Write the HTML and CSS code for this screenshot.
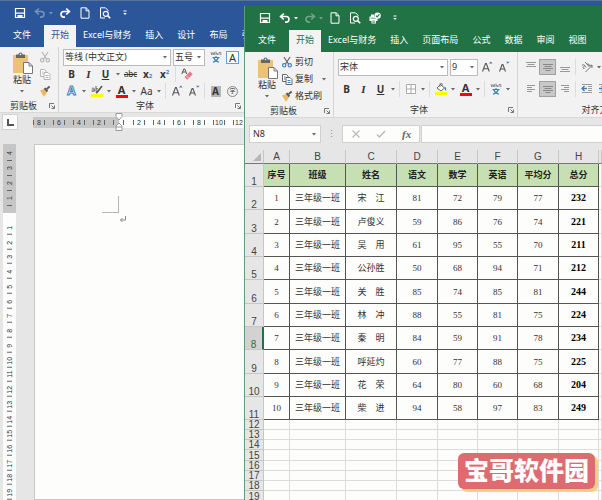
FILE: index.html
```html
<!DOCTYPE html>
<html lang="zh-CN">
<head>
    <meta charset="UTF-8">
    <meta name="viewport" content="width=device-width, initial-scale=1.0">
    <title>Word 与 Excel</title>
    <link rel="stylesheet" href="styles.css">
</head>
<body>
    <!-- shared icons -->
    <svg class="sprite" aria-hidden="true">
        <symbol id="i-save" viewBox="0 0 12 12"><path d="M1.5 1.5h9v9h-9z" fill="none" stroke="currentColor" stroke-width="1.2"/><path d="M2 5.6h8v1.2H2zM3.5 8h5v3h-5z" fill="currentColor"/></symbol>
        <symbol id="i-undo" viewBox="0 0 12 12"><path d="M4.8 1.5 1.5 4.5l3.3 3M1.8 4.5h5.4a2.8 2.8 0 0 1 0 5.6H6" fill="none" stroke="currentColor" stroke-width="1.6"/></symbol>
        <symbol id="i-redo" viewBox="0 0 12 12"><path d="m7.2 1.5 3.3 3-3.3 3M10.2 4.5H4.8a2.8 2.8 0 0 0 0 5.6H6" fill="none" stroke="currentColor" stroke-width="1.6"/></symbol>
        <symbol id="i-doc" viewBox="0 0 12 12"><path d="M2 .8h5.2L10 3.600v7.600H2zM7 .8v3h3" fill="none" stroke="currentColor"/></symbol>
        <symbol id="i-preview" viewBox="0 0 12 12"><path d="M6 11H1.500V.8h5L9 3.300V4" fill="none" stroke="currentColor"/><circle cx="6.800" cy="6.800" r="2.500" fill="none" stroke="currentColor" stroke-width="1.200"/><path d="m8.600 8.600 2.600 2.600" stroke="currentColor" stroke-width="1.600"/></symbol>
        <symbol id="i-print" viewBox="0 0 12 12"><path d="M.5 4.500h8V9h-8zM2 2.500h3v2H2zM2.500 8H7v3.500H2.500z" fill="currentColor"/><path d="M3.300 9h2.900M3.300 10.300h2.900M1.500 6.200h6" stroke="#217346" stroke-width=".7"/><circle cx="8.600" cy="3.600" r="3.200" fill="currentColor"/><path d="m7 3.600 1.200 1.300 2.200-2.500" fill="none" stroke="#217346" stroke-width="1.100"/></symbol>
        <symbol id="i-more" viewBox="0 0 12 12"><path d="M4.500 3.500h3v1h-3zM4.200 6h3.600L6 8z" fill="currentColor"/></symbol>
        <symbol id="i-caret" viewBox="0 0 6 6"><path d="M1 2h4L3 4.400z" fill="currentColor"/></symbol>
        <symbol id="i-paste" viewBox="0 0 20 22"><path d="M0 3h15v18H0z" fill="#edc277"/><path d="M3 2.500h2.500a2 2 0 0 1 4 0H12V6H3z" fill="#666"/><circle cx="7.500" cy="2.400" r=".8" fill="#f1f1f1"/><path d="M10.500 10.500h5.500l3.500 3.500v7.500h-9z" fill="#fff" stroke="#777"/><path d="M16 10.500V14h3.500" fill="none" stroke="#777"/></symbol>
        <symbol id="i-cut" viewBox="0 0 12 12"><path d="M3 1l4.500 7M9 1 4.500 8" stroke="var(--line)" stroke-width="1.200" fill="none"/><circle cx="3.200" cy="9.300" r="1.700" fill="none" stroke="var(--tint)" stroke-width="1.100"/><circle cx="8.800" cy="9.300" r="1.700" fill="none" stroke="var(--tint)" stroke-width="1.100"/></symbol>
        <symbol id="i-copy" viewBox="0 0 12 12"><path d="M1.500 1.500h4L7 3v5.500H1.500z" fill="#fff" stroke="var(--line)"/><path d="M5 4.500h4l2 2v5H5z" fill="#fff" stroke="var(--line)"/><path d="M6.500 7.500h3M6.500 9.500h3M3 4h1.500M3 6h1.500" stroke="var(--tint)"/></symbol>
        <symbol id="i-brush" viewBox="0 0 12 12"><path d="M1 5.500 5 4l3 3.500-3 4.200z" fill="#edb860"/><path d="m4.800 3.800 1.400-1.300 3 3.300-1.500 1.400z" fill="#555"/><path d="m7.600 4.200 3-2.700" stroke="#555" stroke-width="1.800"/></symbol>
        <symbol id="i-launch" viewBox="0 0 6 6"><path d="M.5 5V.5H5M2.500 2.500l2.500 2.500M5.500 2.500v3h-3" fill="none" stroke="#666" stroke-width=".9"/></symbol>
        <symbol id="i-pinyin" viewBox="0 0 12 12"><path d="m1 1 .8 3L3 1.500 4 4l.8-3M6 4V.5M6 2.500h1.500V4M9 4V1.500h1.800V4" fill="none" stroke="#777" stroke-width=".8"/><path d="M2.500 6.500h7M6 5v1.500M8.500 6.500C7.500 9 5.500 10.500 3 11.300M3.500 6.500C4.500 9 6.500 10.500 9 11.300" fill="none" stroke="#3c7fc0" stroke-width="1.100"/></symbol>
        <symbol id="i-eraser" viewBox="0 0 12 12"><path d="m.8 6 2-5h1l2 5M1.700 4h3" fill="none" stroke="#555"/><path d="m3.500 9 5.500-5.500 2.700 2.700L6.200 11.700z" fill="#e8788a"/><path d="M5 7.500l2.700 2.700" stroke="#fff" stroke-width=".7"/></symbol>
        <symbol id="i-marker" viewBox="0 0 12 12"><path d="M.8 3.500c1.500-1 2.500-.3 2.500 1V6.500M3.300 4.700C1.500 4.700.7 5.300.8 6s1.700.9 2.500-.3M5 1v5.500M5 4c1-.9 2.300-.5 2.300.9S6 6.900 5 6" fill="none" stroke="#555" stroke-width=".9"/><path d="m11 1-4.500 6-1.500 1" fill="none" stroke="#555" stroke-width="1.600"/><path d="M0 9h12v3H0z" fill="#ff0"/></symbol>
        <symbol id="i-fill" viewBox="0 0 12 12"><path d="m2 5 3.500-3.500L9.500 5 6 8z" fill="#fff" stroke="#666"/><path d="M5 4V.8c0-1 2-1 2 0V3" fill="none" stroke="#666" stroke-width=".9"/><path d="M9.500 3.500c2 1 2 3 1.500 4.500-1-.8-1.500-2-1.500-4.500z" fill="#3c7fc0"/><path d="M0 9h12v3H0z" fill="#ff0"/></symbol>
        <symbol id="i-border" viewBox="0 0 12 12"><path d="M1.500 1.500h9v9h-9zM6 1.500v9M1.500 6h9" fill="#fff" stroke="#aaa"/></symbol>
        <symbol id="i-atop" viewBox="0 0 12 12"><path d="M1 1.500h10M2.500 3.500h7M1 5.500h10" stroke="#999" fill="none"/></symbol>
        <symbol id="i-amid" viewBox="0 0 12 12"><path d="M1 3.500h10M2.500 5.500h7M1 7.500h10M3.500 9.500h5" stroke="#888" fill="none"/></symbol>
        <symbol id="i-abot" viewBox="0 0 12 12"><path d="M1 6.500h10M2.500 8.500h7M1 10.500h10" stroke="#999" fill="none"/></symbol>
        <symbol id="i-left" viewBox="0 0 12 12"><path d="M2 2.500h8M2 4.500h5M2 6.500h8M2 8.500h5" stroke="#999" fill="none"/></symbol>
        <symbol id="i-right" viewBox="0 0 12 12"><path d="M2 2.500h8M5 4.500h5M2 6.500h8M5 8.500h5" stroke="#999" fill="none"/></symbol>
        <symbol id="i-angle" viewBox="0 0 12 12"><path d="M1 4.500c1.300-1.500 2.500-.8 3 .5l1 1.500M3.500 5C1.500 6 1.800 8 3.500 7.500M4 1l4 4.500M6 3.300c1.500-1 3.200.6 2 2.200M4.500 11 11 4.500M8.500 4.300H11V7" fill="none" stroke="#666" stroke-width=".9"/></symbol>
        <symbol id="i-indent" viewBox="0 0 12 12"><path d="M1 1.500h10M7 3.500h4M7 5.500h4M7 7.500h4M1 9.500h10" stroke="#999"/><path d="M6 5.500H1.500M3.500 3 1 5.500 3.500 8" fill="none" stroke="#3c7fc0" stroke-width="1.300"/></symbol>
        <symbol id="i-indent-more" viewBox="0 0 12 12"><path d="M1 1.500h10M7 3.500h4M7 5.500h4M7 7.500h4M1 9.500h10" stroke="#999"/><path d="M1 5.500h4.500M3.500 3 6 5.500 3.500 8" fill="none" stroke="#3c7fc0" stroke-width="1.300"/></symbol>
        <symbol id="i-grow" viewBox="0 0 12 12"><path d="m1.500 10.500 3-8h.8l3 8M2.500 7.800h5" fill="none" stroke="#555" stroke-width="1.100"/><path d="M8 2.500h3.500L9.800.5z" fill="#3c7fc0"/></symbol>
        <symbol id="i-shrink" viewBox="0 0 12 12"><path d="m1.500 10.500 2.600-7h.8l2.600 7M2.500 8h4" fill="none" stroke="#555" stroke-width="1.100"/><path d="M8 .7h3.500L9.800 2.700z" fill="#3c7fc0"/></symbol>
    </svg>

    <div class="desktop">
        <section class="window word">
            <header class="titlebar">
                <div class="quick">
                    <button aria-label="保存"><svg><use href="#i-save"/></svg></button>
                    <button class="dim" aria-label="撤销"><svg><use href="#i-undo"/></svg></button>
                    <button class="caret dim" aria-label="撤销列表"><svg><use href="#i-caret"/></svg></button>
                    <button aria-label="重复"><svg><use href="#i-redo"/></svg></button>
                    <button aria-label="新建"><svg><use href="#i-doc"/></svg></button>
                    <button aria-label="打印预览"><svg><use href="#i-preview"/></svg></button>
                    <button aria-label="自定义"><svg><use href="#i-more"/></svg></button>
                </div>
                <nav class="tabs">
                    <a href="#" class="file">文件</a>
                    <a href="#" class="active">开始</a>
                    <a href="#">Excel与财务</a>
                    <a href="#">插入</a>
                    <a href="#">设计</a>
                    <a href="#">布局</a>
                    <a href="#">引用</a>
                </nav>
            </header>

            <div class="ribbon">
                <div class="group clipboard">
                    <div class="group-body">
                        <button class="paste"><svg class="big"><use href="#i-paste"/></svg>粘贴<svg class="arrow"><use href="#i-caret"/></svg></button>
                        <div class="rows faded">
                            <button class="tool" aria-label="剪切"><svg><use href="#i-cut"/></svg></button>
                            <button class="tool" aria-label="复制"><svg><use href="#i-copy"/></svg></button>
                            <button class="tool" aria-label="格式刷"><svg><use href="#i-brush"/></svg></button>
                        </div>
                    </div>
                    <div class="group-name"><span>剪贴板</span><svg><use href="#i-launch"/></svg></div>
                </div>
                <div class="group font">
                    <div class="rows">
                        <div class="row">
                            <span class="combo family"><select aria-label="字体"><option>等线 (中文正文)</option></select><svg class="arrow"><use href="#i-caret"/></svg></span>
                            <span class="combo size"><select aria-label="字号"><option>五号</option></select><svg class="arrow"><use href="#i-caret"/></svg></span>
                            <button class="tool" aria-label="拼音指南"><svg><use href="#i-pinyin"/></svg></button>
                            <button class="tool"><span class="framed">A</span></button>
                        </div>
                        <div class="row">
                            <button class="tool"><b>B</b></button>
                            <button class="tool"><i>I</i></button>
                            <button class="tool"><u>U</u></button>
                            <button class="caret" aria-label="下划线"><svg><use href="#i-caret"/></svg></button>
                            <button class="tool"><s>abc</s></button>
                            <button class="tool script">x<sub>2</sub></button>
                            <button class="tool script">x<sup>2</sup></button>
                            <span class="sep"></span>
                            <button class="tool" aria-label="清除格式"><svg><use href="#i-eraser"/></svg></button>
                        </div>
                        <div class="row">
                            <button class="tool"><span class="outline">A</span></button>
                            <button class="caret" aria-label="文本效果"><svg><use href="#i-caret"/></svg></button>
                            <button class="tool" aria-label="突出显示"><svg><use href="#i-marker"/></svg></button>
                            <button class="caret" aria-label="突出颜色"><svg><use href="#i-caret"/></svg></button>
                            <button class="tool"><span class="color">A</span></button>
                            <button class="caret" aria-label="字体颜色"><svg><use href="#i-caret"/></svg></button>
                            <button class="tool">Aa</button>
                            <button class="caret" aria-label="大小写"><svg><use href="#i-caret"/></svg></button>
                            <span class="sep"></span>
                            <button class="tool" aria-label="增大字号"><svg><use href="#i-grow"/></svg></button>
                            <button class="tool" aria-label="减小字号"><svg><use href="#i-shrink"/></svg></button>
                            <span class="sep"></span>
                            <button class="tool"><span class="shaded">A</span></button>
                            <button class="tool"><span class="ring">字</span></button>
                        </div>
                    </div>
                    <div class="group-name"><span>字体</span><svg><use href="#i-launch"/></svg></div>
                </div>
            </div>

            <div class="ruler-bar">
                <button class="tab-stop" aria-label="制表符"></button>
                <div class="ruler">
                    <div class="outside"><span>8</span><span>6</span><span>4</span><span>2</span><span class="half"></span></div>
                    <div class="inside"><span class="half"></span><span>2</span><span>4</span><span>6</span><span>8</span><span>10</span><span>12</span></div>
                    <svg class="indent-mark" viewBox="0 0 8 18"><path d="M1 .5h6v3L4 7 1 3.500zM4 10l3 3v4.500H1V13zM1 14h6" fill="#fff" stroke="#999"/></svg>
                </div>
            </div>

            <div class="document">
                <div class="v-ruler">
                    <div class="outside"><span>4</span><span>3</span><span>2</span><span>1</span></div>
                    <div class="inside">
                        <span>1</span><span>2</span><span>3</span><span>4</span><span>5</span><span>6</span><span>7</span><span>8</span><span>9</span><span>10</span><span>11</span><span>12</span><span>13</span><span>14</span><span>15</span><span>16</span><span>17</span><span>18</span><span>19</span>
                    </div>
                </div>
                <div class="page">
                    <div class="corner"></div>
                    <svg class="return" viewBox="0 0 8 8"><path d="M6.500 1v4h-5M3.500 3l-2 2 2 2" fill="none" stroke="#888"/></svg>
                </div>
            </div>
        </section>

        <section class="window excel">
            <header class="titlebar">
                <div class="quick">
                    <button aria-label="保存"><svg><use href="#i-save"/></svg></button>
                    <button aria-label="撤销"><svg><use href="#i-undo"/></svg></button>
                    <button class="caret" aria-label="撤销列表"><svg><use href="#i-caret"/></svg></button>
                    <button class="dim" aria-label="恢复"><svg><use href="#i-redo"/></svg></button>
                    <button class="caret dim" aria-label="恢复列表"><svg><use href="#i-caret"/></svg></button>
                    <button aria-label="新建"><svg><use href="#i-doc"/></svg></button>
                    <button aria-label="打印预览"><svg><use href="#i-preview"/></svg></button>
                    <button aria-label="快速打印"><svg><use href="#i-print"/></svg></button>
                    <button aria-label="自定义"><svg><use href="#i-more"/></svg></button>
                </div>
                <nav class="tabs">
                    <a href="#" class="file">文件</a>
                    <a href="#" class="active">开始</a>
                    <a href="#">Excel与财务</a>
                    <a href="#">插入</a>
                    <a href="#">页面布局</a>
                    <a href="#">公式</a>
                    <a href="#">数据</a>
                    <a href="#">审阅</a>
                    <a href="#">视图</a>
                </nav>
            </header>

            <div class="ribbon">
                <div class="group clipboard">
                    <div class="group-body">
                        <button class="paste"><svg class="big"><use href="#i-paste"/></svg>粘贴<svg class="arrow"><use href="#i-caret"/></svg></button>
                        <div class="rows">
                            <button class="labelled"><svg><use href="#i-cut"/></svg>剪切</button>
                            <button class="labelled"><svg><use href="#i-copy"/></svg>复制<svg class="arrow"><use href="#i-caret"/></svg></button>
                            <button class="labelled"><svg><use href="#i-brush"/></svg>格式刷</button>
                        </div>
                    </div>
                    <div class="group-name"><span>剪贴板</span><svg><use href="#i-launch"/></svg></div>
                </div>
                <div class="group font">
                    <div class="rows">
                        <div class="row">
                            <span class="combo family"><select aria-label="字体"><option>宋体</option></select><svg class="arrow"><use href="#i-caret"/></svg></span>
                            <span class="combo size"><select aria-label="字号"><option>9</option></select><svg class="arrow"><use href="#i-caret"/></svg></span>
                            <button class="tool" aria-label="增大字号"><svg><use href="#i-grow"/></svg></button>
                            <button class="tool" aria-label="减小字号"><svg><use href="#i-shrink"/></svg></button>
                        </div>
                        <div class="row">
                            <button class="tool"><b>B</b></button>
                            <button class="tool"><i>I</i></button>
                            <button class="tool"><u>U</u></button>
                            <button class="caret" aria-label="下划线"><svg><use href="#i-caret"/></svg></button>
                            <span class="sep"></span>
                            <button class="tool" aria-label="边框"><svg><use href="#i-border"/></svg></button>
                            <button class="caret" aria-label="边框样式"><svg><use href="#i-caret"/></svg></button>
                            <span class="sep"></span>
                            <button class="tool" aria-label="填充"><svg><use href="#i-fill"/></svg></button>
                            <button class="caret" aria-label="填充颜色"><svg><use href="#i-caret"/></svg></button>
                            <button class="tool"><span class="color">A</span></button>
                            <button class="caret" aria-label="字体颜色"><svg><use href="#i-caret"/></svg></button>
                            <span class="sep"></span>
                            <button class="tool" aria-label="拼音"><svg><use href="#i-pinyin"/></svg></button>
                            <button class="caret" aria-label="拼音设置"><svg><use href="#i-caret"/></svg></button>
                        </div>
                    </div>
                    <div class="group-name"><span>字体</span><svg><use href="#i-launch"/></svg></div>
                </div>
                <div class="group align">
                    <div class="rows">
                        <div class="row">
                            <button class="tool" aria-label="顶端对齐"><svg><use href="#i-atop"/></svg></button>
                            <button class="tool pressed" aria-label="垂直居中"><svg><use href="#i-amid"/></svg></button>
                            <button class="tool" aria-label="底端对齐"><svg><use href="#i-abot"/></svg></button>
                            <span class="sep"></span>
                            <button class="tool" aria-label="方向"><svg><use href="#i-angle"/></svg></button>
                            <button class="caret" aria-label="方向选项"><svg><use href="#i-caret"/></svg></button>
                        </div>
                        <div class="row">
                            <button class="tool" aria-label="左对齐"><svg><use href="#i-left"/></svg></button>
                            <button class="tool pressed" aria-label="居中"><svg><use href="#i-amid"/></svg></button>
                            <button class="tool" aria-label="右对齐"><svg><use href="#i-right"/></svg></button>
                            <span class="sep"></span>
                            <button class="tool" aria-label="减少缩进"><svg><use href="#i-indent"/></svg></button>
                            <button class="tool" aria-label="增加缩进"><svg><use href="#i-indent-more"/></svg></button>
                        </div>
                    </div>
                    <div class="group-name"><span>对齐方式</span></div>
                </div>
            </div>

            <div class="formula-bar">
                <span class="name-box"><input type="text" value="N8" aria-label="名称框"><svg class="arrow"><use href="#i-caret"/></svg></span>
                <span class="dots">⋮</span>
                <span class="formula-tools">
                    <button aria-label="取消"><svg viewBox="0 0 10 10"><path d="m1.500 1.500 7 7M8.500 1.500l-7 7" stroke="#bbb" stroke-width="1.300"/></svg></button>
                    <button aria-label="输入"><svg viewBox="0 0 10 10"><path d="M1 5.500 3.500 8 9 2" fill="none" stroke="#bbb" stroke-width="1.500"/></svg></button>
                    <button class="fx">fx</button>
                </span>
                <input class="formula" type="text" aria-label="编辑栏">
            </div>

            <table class="sheet">
                <colgroup>
                    <col class="c-head"><col class="c-a"><col class="c-b"><col class="c-c"><col class="c-d"><col class="c-e"><col class="c-f"><col class="c-g"><col class="c-h"><col>
                </colgroup>
                <thead>
                    <tr><th><svg class="select-all" viewBox="0 0 8 8"><path d="M8 0v8H0z" fill="#b5b5b5"/></svg></th><th>A</th><th>B</th><th>C</th><th>D</th><th>E</th><th>F</th><th>G</th><th>H</th><th></th></tr>
                </thead>
                <tbody class="data">
                    <tr class="titles"><th>1</th><td>序号</td><td>班级</td><td>姓名</td><td>语文</td><td>数学</td><td>英语</td><td>平均分</td><td>总分</td><td></td></tr>
                    <tr><th>2</th><td>1</td><td>三年级一班</td><td>宋　江</td><td>81</td><td>72</td><td>79</td><td>77</td><td>232</td><td></td></tr>
                    <tr><th>3</th><td>2</td><td>三年级一班</td><td>卢俊义</td><td>59</td><td>86</td><td>76</td><td>74</td><td>221</td><td></td></tr>
                    <tr><th>4</th><td>3</td><td>三年级一班</td><td>吴　用</td><td>61</td><td>95</td><td>55</td><td>70</td><td>211</td><td></td></tr>
                    <tr><th>5</th><td>4</td><td>三年级一班</td><td>公孙胜</td><td>50</td><td>68</td><td>94</td><td>71</td><td>212</td><td></td></tr>
                    <tr><th>6</th><td>5</td><td>三年级一班</td><td>关　胜</td><td>85</td><td>74</td><td>85</td><td>81</td><td>244</td><td></td></tr>
                    <tr><th>7</th><td>6</td><td>三年级一班</td><td>林　冲</td><td>88</td><td>55</td><td>81</td><td>75</td><td>224</td><td></td></tr>
                    <tr class="current"><th>8</th><td>7</td><td>三年级一班</td><td>秦　明</td><td>84</td><td>59</td><td>91</td><td>78</td><td>234</td><td></td></tr>
                    <tr><th>9</th><td>8</td><td>三年级一班</td><td>呼延灼</td><td>60</td><td>77</td><td>88</td><td>75</td><td>225</td><td></td></tr>
                    <tr><th>10</th><td>9</td><td>三年级一班</td><td>花　荣</td><td>64</td><td>80</td><td>60</td><td>68</td><td>204</td><td></td></tr>
                    <tr><th>11</th><td>10</td><td>三年级一班</td><td>柴　进</td><td>94</td><td>58</td><td>97</td><td>83</td><td>249</td><td></td></tr>
                </tbody>
                <tbody class="empty">
                    <tr><th>12</th><td></td><td></td><td></td><td></td><td></td><td></td><td></td><td></td><td></td></tr>
                    <tr><th>13</th><td></td><td></td><td></td><td></td><td></td><td></td><td></td><td></td><td></td></tr>
                    <tr><th>14</th><td></td><td></td><td></td><td></td><td></td><td></td><td></td><td></td><td></td></tr>
                    <tr><th>15</th><td></td><td></td><td></td><td></td><td></td><td></td><td></td><td></td><td></td></tr>
                    <tr><th>16</th><td></td><td></td><td></td><td></td><td></td><td></td><td></td><td></td><td></td></tr>
                    <tr><th>17</th><td></td><td></td><td></td><td></td><td></td><td></td><td></td><td></td><td></td></tr>
                    <tr><th>18</th><td></td><td></td><td></td><td></td><td></td><td></td><td></td><td></td><td></td></tr>
                    <tr><th>19</th><td></td><td></td><td></td><td></td><td></td><td></td><td></td><td></td><td></td></tr>
                </tbody>
            </table>
        </section>

        <div class="watermark">宝哥软件园</div>
    </div>
</body>
</html>
```
FILE: styles.css
```css
* {
    box-sizing: border-box;
}
body {
    margin: 0;
    font-family: "Noto Sans", "Noto Sans CJK SC", sans-serif;
    font-size: 9px;
    line-height: 12px;
    color: #333;
}
.sprite {
    display: none;
}
button, select, input {
    font: inherit;
    color: inherit;
    background: none;
    border: 0;
    border-radius: 0;
    margin: 0;
    padding: 0;
    outline: none;
}
button {
    flex: none;
    display: flex;
    align-items: center;
    justify-content: center;
}
svg {
    flex: none;
    display: block;
    width: 12px;
    height: 12px;
}
svg.arrow, .caret svg {
    width: 6px;
    height: 6px;
    color: #666;
}

/* windows */
.desktop {
    position: relative;
    height: 100vh;
    overflow: hidden;
}
.window {
    position: absolute;
    right: 0;
    bottom: 0;
    display: flex;
    flex-direction: column;
    overflow: hidden;
}
.word {
    left: 0;
    top: 0;
    border-top: 1px solid #5b7496;
    background: #e6e6e6;
    --brand: #2b579a;
}
.excel {
    left: 244px;
    top: 6px;
    border-left: 1px solid #5f9c7a;
    background: #fdfdfc;
    --brand: #217346;
}

/* title bar */
.titlebar {
    flex: none;
    background: var(--brand);
    color: #fff;
}
.quick {
    display: flex;
    align-items: center;
    height: 24px;
    padding-left: 12px;
}
.quick button {
    width: 16px;
    height: 16px;
    margin-right: 4px;
}
.quick .caret {
    width: 6px;
    margin-left: -4px;
    margin-right: 3px;
}
.quick .caret svg {
    color: inherit;
}
.quick .dim {
    opacity: 0.35;
}
.tabs {
    display: flex;
    height: 22px;
    overflow: hidden;
}
.tabs a {
    flex: none;
    padding: 0 7px;
    line-height: 20px;
    color: #fff;
    text-decoration: none;
}
.tabs .file {
    padding: 0 13px;
}
.tabs .active {
    background: #f3f3f3;
    color: var(--brand);
}

/* ribbon */
.ribbon {
    flex: none;
    display: flex;
    height: 66px;
    background: #f2f2f2;
    border-bottom: 1px solid #d8d8d8;
}
.group {
    flex: none;
    display: flex;
    flex-direction: column;
    border-right: 1px solid #d4d4d4;
    padding: 2px 0 0 4px;
}
.group-body {
    display: flex;
}
.clipboard {
    padding-left: 10px;
    width: 59px;
}
.excel .clipboard {
    width: 89px;
}
.font {
    width: 186px;
}
.excel .font {
    width: 184px;
}
.align {
    width: 168px;
}
.excel .font, .excel .align {
    padding-top: 7px;
}
.rows {
    display: flex;
    flex-direction: column;
    gap: 1px;
}
.excel .font .rows, .excel .align .rows {
    gap: 6px;
}
.row {
    display: flex;
    align-items: center;
    height: 16px;
}
.group-name {
    display: flex;
    align-items: center;
    margin-top: auto;
    height: 14px;
}
.group-name span {
    flex: 1;
    padding-right: 8px;
    text-align: center;
}
.clipboard .group-name span {
    padding-right: 12px;
}
.group-name svg {
    width: 6px;
    height: 6px;
    margin-right: 3px;
}
.paste {
    flex-direction: column;
    justify-content: flex-start;
    width: 24px;
    padding-top: 3px;
}
.paste .big {
    width: 20px;
    height: 22px;
    margin-left: 2px;
}
.paste .arrow {
    margin-top: 2px;
}
.clipboard .rows {
    --line: #666;
    --tint: #3c7fc0;
    margin-left: 2px;
}
.clipboard .faded {
    --line: #b5b5b5;
    --tint: #b5b5b5;
}
.labelled {
    justify-content: flex-start;
    gap: 2px;
    height: 16px;
}
.labelled .arrow {
    margin-left: 6px;
}
.tool {
    width: 17px;
    height: 16px;
    font-size: 10px;
}
.caret {
    width: 8px;
    height: 16px;
}
.sep {
    width: 1px;
    height: 16px;
    margin: 0 2px;
    background: #dcdcdc;
}
.pressed {
    background: #c8c8c8;
    border: 1px solid #a0a0a0;
}
.tool i {
    font-family: "Liberation Serif", serif;
    font-weight: bold;
    font-size: 11px;
}
.tool u {
    font-weight: bold;
}
.tool s {
    font-size: 8px;
}
.script {
    font-weight: bold;
}
.script sub, .script sup {
    font-size: 6px;
    line-height: 6px;
    color: #3c7fc0;
}
.script sub {
    align-self: flex-end;
    margin-bottom: 3px;
}
.script sup {
    align-self: flex-start;
    margin-top: 3px;
}
.framed {
    width: 13px;
    border: 1px solid #6a9fd4;
    background: #fff;
    line-height: 11px;
    font-size: 11px;
}
.outline {
    font-weight: bold;
    font-size: 12px;
    color: #fff;
    -webkit-text-stroke: 1px #3c7fc0;
}
.color {
    width: 12px;
    border-bottom: 3px solid #f00;
    font-weight: bold;
    line-height: 10px;
    font-size: 11px;
}
.shaded {
    width: 10px;
    background: #b5b5b5;
    font-weight: bold;
    line-height: 11px;
}
.ring {
    width: 11px;
    border: 1px solid #888;
    border-radius: 50%;
    font-size: 6px;
    line-height: 9px;
}
.combo {
    display: flex;
    align-items: center;
    height: 17px;
    margin-right: 2px;
    padding-right: 2px;
    background: #fff;
    border: 1px solid #bbb;
}
.combo select {
    flex: 1;
    min-width: 0;
    height: 15px;
    padding-left: 1px;
    appearance: none;
}
.family {
    width: 108px;
}
.size {
    width: 32px;
}
.excel .family {
    width: 110px;
}
.excel .size {
    width: 28px;
    margin-right: 0;
}

/* rulers */
.ruler-bar {
    flex: none;
    display: flex;
    height: 31px;
    padding: 1px 0 0 2px;
}
.tab-stop {
    width: 16px;
    height: 16px;
    background: #fdfdfd;
    border: 1px solid #d0d0d0;
}
.tab-stop::before {
    content: "";
    width: 5px;
    height: 5px;
    border-left: 2px solid #555;
    border-bottom: 2px solid #555;
}
.ruler {
    position: relative;
    flex: 1;
    display: flex;
    height: 11px;
    margin: 3px 0 0 15px;
    font-family: "Liberation Sans", sans-serif;
    font-size: 7px;
    line-height: 11px;
}
.ruler .outside {
    display: flex;
    justify-content: flex-end;
    width: 86px;
    overflow: hidden;
}
.ruler .inside {
    flex: 1;
    display: flex;
    overflow: hidden;
}
.outside {
    background: #c6c6c6;
}
.inside {
    background: #fdfdfd;
}
.ruler span {
    flex: none;
    display: flex;
    align-items: center;
    justify-content: space-between;
    width: 20px;
    padding: 0 4px;
}
.ruler span::before, .ruler span::after {
    content: "";
    width: 1px;
    height: 5px;
    background: #666;
}
.ruler .half {
    width: 10px;
}
.ruler .half::after {
    display: none;
}
.indent-mark {
    position: absolute;
    left: 82px;
    top: -4px;
    width: 8px;
    height: 18px;
}
.document {
    flex: 1;
    display: flex;
    min-height: 0;
    padding-left: 3px;
}
.v-ruler {
    flex: none;
    display: flex;
    flex-direction: column;
    width: 13px;
    font-family: "Liberation Sans", sans-serif;
    font-size: 7px;
    line-height: 13px;
}
.v-ruler .outside {
    height: 69px;
    padding-top: 2px;
}
.v-ruler .inside {
    flex: 1;
    display: flex;
    flex-direction: column;
    min-height: 0;
    padding-top: 7px;
}
.v-ruler span {
    display: flex;
    align-items: center;
    justify-content: center;
    position: relative;
    width: 13px;
    writing-mode: vertical-rl;
    transform: rotate(180deg);
}
.v-ruler .outside span {
    height: 15px;
}
.v-ruler .inside span {
    flex: 1;
    min-height: 0;
}
.v-ruler span::after {
    content: "";
    position: absolute;
    left: 4px;
    top: 0;
    width: 5px;
    height: 1px;
    background: #666;
}
.page {
    flex: 1;
    margin-left: 18px;
    padding: 51px 0 0 67px;
    background: #fdfdfc;
    border: 1px solid #c8c8c8;
}
.corner {
    width: 17px;
    height: 17px;
    border-right: 1px solid #b5b5b5;
    border-bottom: 1px solid #b5b5b5;
}
.return {
    width: 8px;
    height: 8px;
    margin: 2px 0 0 17px;
}

/* formula bar */
.formula-bar {
    flex: none;
    display: flex;
    align-items: center;
    height: 32px;
    padding-left: 4px;
    background: #e6e6e6;
}
.name-box, .formula-tools, .formula {
    height: 18px;
    background: #fdfdfc;
    border: 1px solid #d0d0d0;
}
.name-box {
    display: flex;
    align-items: center;
    width: 72px;
    padding: 0 3px;
}
.name-box input {
    flex: 1;
    min-width: 0;
}
.dots {
    width: 21px;
    text-align: center;
    color: #888;
}
.formula-tools {
    display: flex;
    align-items: center;
    justify-content: space-around;
    width: 78px;
}
.formula-tools svg {
    width: 10px;
    height: 10px;
}
.fx {
    font-family: "Liberation Serif", serif;
    font-style: italic;
    font-weight: bold;
    font-size: 11px;
    color: #666;
}
.formula {
    flex: 1;
    min-width: 0;
    margin-left: 1px;
    border-right: 0;
}

/* sheet */
.sheet {
    width: 100%;
    table-layout: fixed;
    border-collapse: separate;
    border-spacing: 0;
    text-align: center;
}
.c-head { width: 19px; }
.c-a { width: 26px; }
.c-b { width: 56px; }
.c-c { width: 51px; }
.c-d { width: 41px; }
.c-e { width: 40px; }
.c-f { width: 40px; }
.c-g { width: 41px; }
.c-h { width: 40px; }
.sheet th, .sheet td {
    padding: 0;
    border-right: 1px solid #dcdcdc;
    border-bottom: 1px solid #dcdcdc;
}
.sheet th {
    font-family: "Liberation Sans", sans-serif;
    font-size: 10px;
    font-weight: normal;
    line-height: 9px;
    color: #444;
    background: #e6e6e6;
    border-color: #c6c6c6;
}
.sheet thead tr {
    height: 14px;
}
.sheet thead th {
    vertical-align: bottom;
    line-height: 12px;
    border-bottom-color: #777;
}
.select-all {
    width: 8px;
    height: 8px;
    margin: 0 2px 2px auto;
}
.data tr {
    height: 23px;
}
.data tr:nth-child(3n) {
    height: 24px;
}
.data th {
    vertical-align: bottom;
}
.data td {
    font-family: "Liberation Serif", "Noto Sans CJK SC", serif;
    font-size: 9px;
    border-color: #555;
}
.data td:nth-child(9) {
    font-size: 10px;
    font-weight: bold;
    color: #000;
}
.data td:last-child {
    border-color: #dcdcdc;
}
.data .titles td {
    font-size: 9px;
    font-weight: bold;
    color: #222;
    background: #c6e0b4;
}
.data .titles td:last-child {
    background: none;
}
.sheet .current th {
    color: #217346;
    background: #d2d2d2;
    border-right: 2px solid #217346;
}
.empty tr {
    height: 10px;
}
.empty tr:nth-child(4n) {
    height: 11px;
}

.watermark {
    position: absolute;
    right: 7px;
    bottom: 11px;
    padding: 0 6px 4px;
    border-radius: 6px;
    background: #dd6b70;
    box-shadow: 3px 3px 0 #f3cf85;
    font-family: "Noto Sans CJK SC", sans-serif;
    font-size: 25px;
    font-weight: 900;
    line-height: 32px;
    color: #fff;
}
```
